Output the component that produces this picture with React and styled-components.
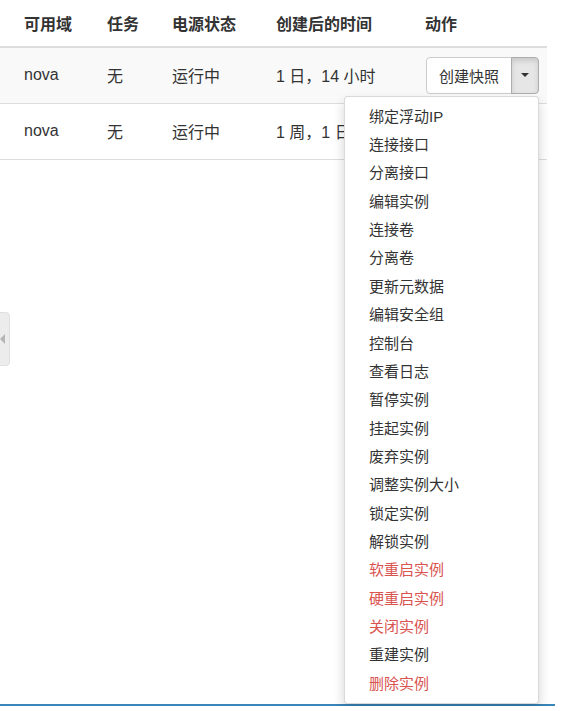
import styled, { createGlobalStyle } from "styled-components";

const GlobalStyle = createGlobalStyle`
  html, body {
    margin: 0;
    padding: 0;
    background: #fff;
  }
  body {
    font-family: "Liberation Sans", "Noto Sans CJK SC", Arial, sans-serif;
    font-size: 15px;
    color: #333;
  }
`;

const rows = [
  { zone: "nova", task: "无", power: "运行中", age: "1 日，14 小时" },
  { zone: "nova", task: "无", power: "运行中", age: "1 周，1 日" },
];

const actions = [
  { label: "绑定浮动IP" },
  { label: "连接接口" },
  { label: "分离接口" },
  { label: "编辑实例" },
  { label: "连接卷" },
  { label: "分离卷" },
  { label: "更新元数据" },
  { label: "编辑安全组" },
  { label: "控制台" },
  { label: "查看日志" },
  { label: "暂停实例" },
  { label: "挂起实例" },
  { label: "废弃实例" },
  { label: "调整实例大小" },
  { label: "锁定实例" },
  { label: "解锁实例" },
  { label: "软重启实例", danger: true },
  { label: "硬重启实例", danger: true },
  { label: "关闭实例", danger: true },
  { label: "重建实例" },
  { label: "删除实例", danger: true },
];

const App = () => {
  return (
    <>
      <GlobalStyle />
      <Page>
        <SideHandle>
          <HandleArrow />
        </SideHandle>
        <Table>
          <colgroup>
            <col style={{ width: 99 }} />
            <col style={{ width: 65 }} />
            <col style={{ width: 104 }} />
            <col style={{ width: 149 }} />
            <col style={{ width: 130 }} />
          </colgroup>
          <thead>
            <tr>
              <Th>可用域</Th>
              <Th>任务</Th>
              <Th>电源状态</Th>
              <Th>创建后的时间</Th>
              <Th>动作</Th>
            </tr>
          </thead>
          <tbody>
            {rows.map((r, i) => (
              <Row key={i} striped={i % 2 === 0}>
                <Td>{r.zone}</Td>
                <Td>{r.task}</Td>
                <Td>{r.power}</Td>
                <Td>{r.age}</Td>
                <Td>
                  <BtnGroup>
                    <Btn>创建快照</Btn>
                    <CaretBtn active={i === 0}>
                      <Caret />
                    </CaretBtn>
                    {i === 0 && (
                      <Menu>
                        {actions.map((a) => (
                          <MenuItem key={a.label} danger={a.danger}>
                            {a.label}
                          </MenuItem>
                        ))}
                      </Menu>
                    )}
                  </BtnGroup>
                </Td>
              </Row>
            ))}
          </tbody>
        </Table>
        <Spacer />
        <BottomLine />
      </Page>
    </>
  );
};

export default App;

const Page = styled.div`
  position: relative;
  height: 706px;
  display: flex;
  flex-direction: column;
`;

const SideHandle = styled.div`
  position: absolute;
  left: -4px;
  top: 312px;
  width: 12px;
  height: 52px;
  background: #ececec;
  border: 1px solid #e0e0e0;
  border-radius: 0 4px 4px 0;
  display: flex;
  align-items: center;
`;

const HandleArrow = styled.div`
  margin-left: 3px;
  width: 0;
  height: 0;
  border-top: 5px solid transparent;
  border-bottom: 5px solid transparent;
  border-right: 5px solid #b5b5b5;
`;

const Table = styled.table`
  width: 547px;
  border-collapse: collapse;
  table-layout: fixed;
  font-size: 16px;
`;

const Th = styled.th`
  height: 47px;
  padding: 0 8px 1px;
  text-align: left;
  vertical-align: middle;
  font-weight: bold;
  color: #333;
  border-bottom: 2px solid #ddd;
  box-sizing: border-box;
  white-space: nowrap;
  &:first-child {
    padding-left: 24px;
  }
`;

const Row = styled.tr`
  background: ${(p) => (p.striped ? "#f9f9f9" : "#fff")};
  border-bottom: 1px solid #ddd;
`;

const Td = styled.td`
  height: 56px;
  padding: 0 8px;
  vertical-align: middle;
  white-space: nowrap;
  box-sizing: border-box;
  &:first-child {
    padding-left: 24px;
  }
`;

const BtnGroup = styled.div`
  position: relative;
  display: inline-flex;
  margin-left: 1px;
`;

const Btn = styled.div`
  height: 37px;
  box-sizing: border-box;
  padding: 0 12px;
  display: flex;
  align-items: center;
  background: #fff;
  border: 1px solid #ccc;
  border-radius: 4px 0 0 4px;
  color: #333;
  font-size: 15px;
`;

const CaretBtn = styled.div`
  width: 28px;
  height: 37px;
  box-sizing: border-box;
  margin-left: -1px;
  display: flex;
  align-items: center;
  justify-content: center;
  background: ${(p) => (p.active ? "#e6e6e6" : "#fff")};
  border: 1px solid ${(p) => (p.active ? "#adadad" : "#ccc")};
  border-radius: 0 4px 4px 0;
  box-shadow: ${(p) => (p.active ? "inset 0 3px 5px rgba(0,0,0,0.125)" : "none")};
`;

const Caret = styled.span`
  width: 0;
  height: 0;
  border-top: 4px solid #333;
  border-left: 4px solid transparent;
  border-right: 4px solid transparent;
`;

const Menu = styled.ul`
  position: absolute;
  top: 39px;
  right: 0;
  z-index: 10;
  width: 195px;
  box-sizing: border-box;
  margin: 0;
  padding: 6px 0 5px;
  list-style: none;
  background: #fff;
  border: 1px solid rgba(0, 0, 0, 0.15);
  border-radius: 4px;
  box-shadow: 0 6px 12px rgba(0, 0, 0, 0.175);
`;

const MenuItem = styled.li`
  padding: 4px 24px;
  line-height: 20.35px;
  font-size: 15px;
  white-space: nowrap;
  color: ${(p) => (p.danger ? "#d9534f" : "#333")};
`;

const Spacer = styled.div`
  flex: 1;
`;

const BottomLine = styled.div`
  width: 555px;
  height: 2px;
  background: #3a85b9;
`;
